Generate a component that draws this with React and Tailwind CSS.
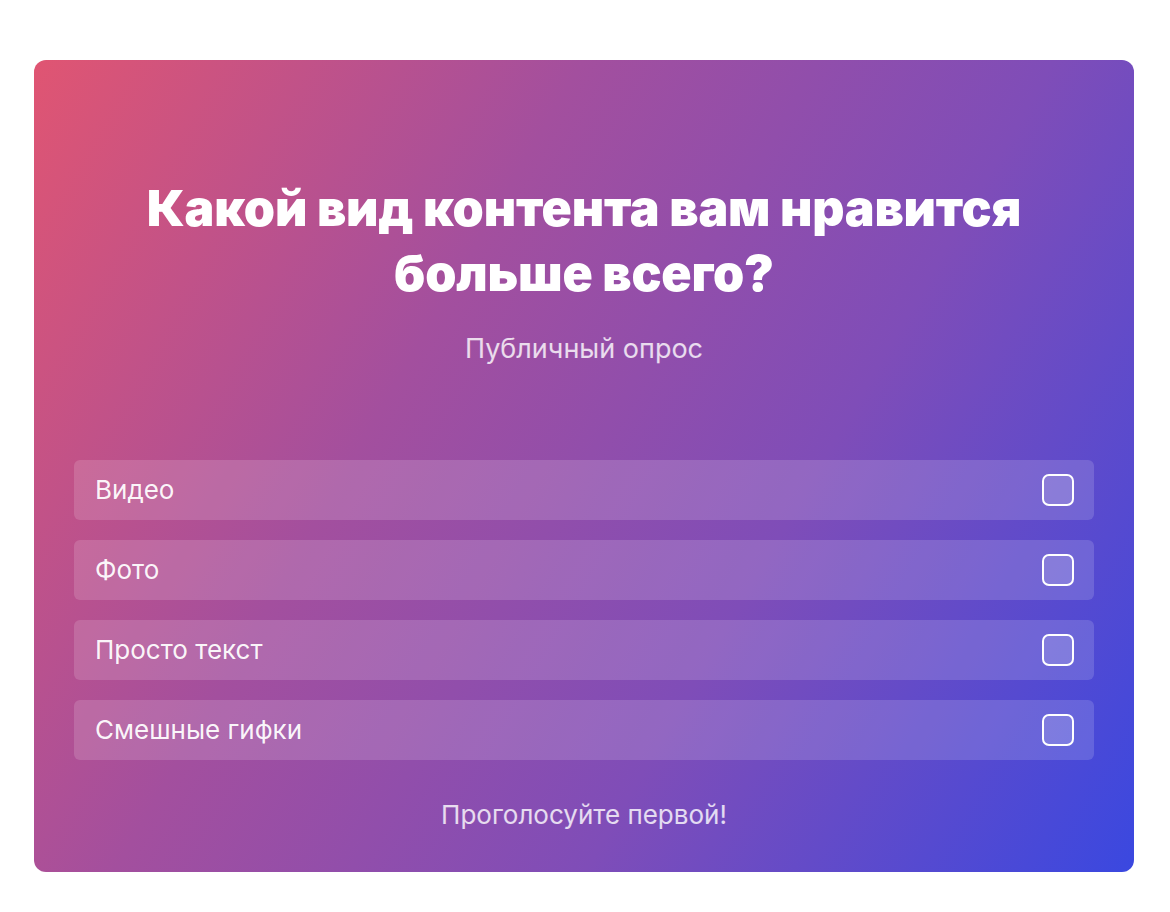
const options = ['Видео', 'Фото', 'Просто текст', 'Смешные гифки'];

function PollOption({ label }) {
  return (
    <div className="flex h-[60px] items-center justify-between rounded-md bg-white/15 pl-[21px] pr-[20px]">
      <span className="text-[26px] leading-[32px] text-white/95">{label}</span>
      <span className="h-[32px] w-[32px] rounded-[7px] border-2 border-white bg-white/15" />
    </div>
  );
}

export default function App() {
  return (
    <div
      className="min-h-screen bg-white pl-[34px] pt-[60px]"
      style={{ fontFamily: 'Inter, "Noto Sans", sans-serif' }}
    >
      <div className="flex h-[812px] w-[1100px] flex-col rounded-xl bg-[linear-gradient(120deg,#e05572_0%,#a34f9e_35%,#7f4db8_65%,#3a48e0_100%)] px-[40px] pt-[116px]">
        <h1 className="mx-auto max-w-[960px] text-center text-[50px] font-black leading-[65px] tracking-[-0.2px] text-white">
          Какой вид контента вам нравится больше всего?
        </h1>
        <p className="mt-[27px] text-center text-[27px] leading-[32px] text-white/80">
          Публичный опрос
        </p>
        <div className="mt-[95px] flex flex-col gap-[20px]">
          {options.map((o) => (
            <PollOption key={o} label={o} />
          ))}
        </div>
        <p className="mt-[39px] text-center text-[26px] leading-[32px] text-white/80">
          Проголосуйте первой!
        </p>
      </div>
    </div>
  );
}
